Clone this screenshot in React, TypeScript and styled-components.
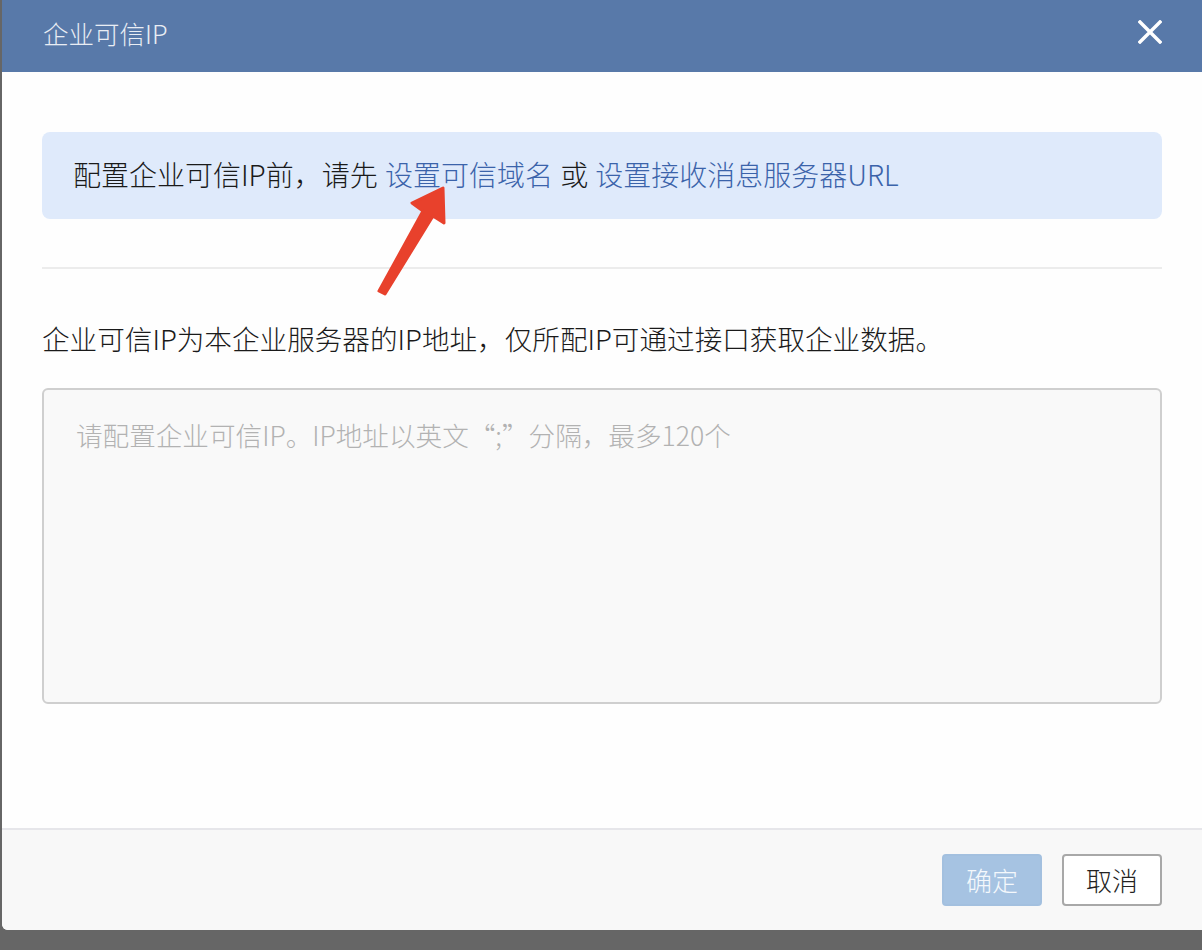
import React from 'react';
import styled, { createGlobalStyle } from 'styled-components';

const GlobalStyle = createGlobalStyle`
  html, body {
    margin: 0;
    padding: 0;
    background: #666666;
    font-family: "Noto Sans CJK SC", "Noto Sans", sans-serif;
  }
  * { box-sizing: border-box; }
`;

const Dialog = styled.div`
  position: relative;
  margin-left: 2px;
  width: 1200px;
  height: 930px;
  background: #fefefe;
  border-bottom-left-radius: 6px;
  display: flex;
  flex-direction: column;
  overflow: hidden;
`;

const Header = styled.div`
  height: 72px;
  flex-shrink: 0;
  background: #5879a9;
  display: flex;
  align-items: center;
  justify-content: space-between;
  padding: 0 40px 0 41px;
`;

const Title = styled.div`
  color: #e9edf4;
  font-size: 25.5px;
  font-weight: 300;
  line-height: 1;
  margin-top: -6px;
`;

const CloseButton = styled.button`
  width: 24px;
  height: 24px;
  padding: 0;
  border: none;
  background: none;
  cursor: pointer;
  display: flex;
  margin-top: -8px;
`;

const Body = styled.div`
  flex: 1;
  padding: 60px 40px 0;
  display: flex;
  flex-direction: column;
`;

const Notice = styled.div`
  height: 87px;
  background: #dfeafb;
  border-radius: 8px;
  display: flex;
  align-items: center;
  padding: 0 31px 4px;
  font-size: 28px;
  font-weight: 300;
  color: #1a1a1a;
  white-space: nowrap;
`;

const Link = styled.a`
  color: #3b63aa;
  text-decoration: none;
  cursor: pointer;
  margin: 0 1px;
`;

const Divider = styled.div`
  height: 2px;
  background: #ececec;
  margin-top: 48px;
`;

const Description = styled.p`
  margin: 52px 0 0;
  font-size: 27.6px;
  font-weight: 300;
  line-height: 34px;
  color: #1a1a1a;
  white-space: nowrap;
`;

const TextArea = styled.textarea`
  margin-top: 33px;
  height: 316px;
  width: 100%;
  resize: none;
  border: 2px solid #cfcfcf;
  border-radius: 6px;
  background: #f9f9f9;
  padding: 26px 32px;
  font-family: inherit;
  font-size: 26.6px;
  font-weight: 300;
  line-height: 38px;
  color: #222;
  outline: none;

  &::placeholder {
    color: #b2b2b2;
  }
`;

const Footer = styled.div`
  height: 102px;
  flex-shrink: 0;
  border-top: 2px solid #e6e6ea;
  background: #f8f8f8;
  display: flex;
  align-items: center;
  justify-content: flex-end;
  gap: 20px;
  padding: 0 40px;
`;

const Button = styled.button<{ $primary?: boolean }>`
  width: 100px;
  height: 52px;
  border-radius: 4px;
  font-family: inherit;
  font-size: 26px;
  font-weight: 300;
  cursor: pointer;
  padding: 0 0 2px;
  border: 2px solid ${p => (p.$primary ? '#a3c0df' : '#a8a8a8')};
  background: ${p => (p.$primary ? '#a6c3e2' : '#ffffff')};
  color: ${p => (p.$primary ? '#f4f8fc' : '#222222')};
`;

const Arrow = styled.svg`
  position: absolute;
  left: 368px;
  top: 180px;
  pointer-events: none;
`;

const App: React.FC = () => {
  return (
    <>
      <GlobalStyle />
      <Dialog>
        <Header>
          <Title>企业可信IP</Title>
          <CloseButton aria-label="关闭">
            <svg width="24" height="24" viewBox="0 0 24 24">
              <path d="M2 2 L22 22 M22 2 L2 22" stroke="#ffffff" strokeWidth="3.4" strokeLinecap="square" />
            </svg>
          </CloseButton>
        </Header>
        <Body>
          <Notice>
            配置企业可信IP前，请先&nbsp;<Link>设置可信域名</Link>&nbsp;或&nbsp;<Link>设置接收消息服务器URL</Link>
          </Notice>
          <Divider />
          <Description>企业可信IP为本企业服务器的IP地址，仅所配IP可通过接口获取企业数据。</Description>
          <TextArea placeholder="请配置企业可信IP。IP地址以英文“;”分隔，最多120个" />
        </Body>
        <Footer>
          <Button $primary>确定</Button>
          <Button>取消</Button>
        </Footer>
        <Arrow width="80" height="120" viewBox="0 0 80 120">
          <path
            d="M9 111 L53 31 L42 23 L73 8 L74 43 L63 36 L15 114 Z"
            fill="#e8412c"
            stroke="#e8412c"
            strokeWidth="3"
            strokeLinejoin="round"
          />
        </Arrow>
      </Dialog>
    </>
  );
};

export default App;
